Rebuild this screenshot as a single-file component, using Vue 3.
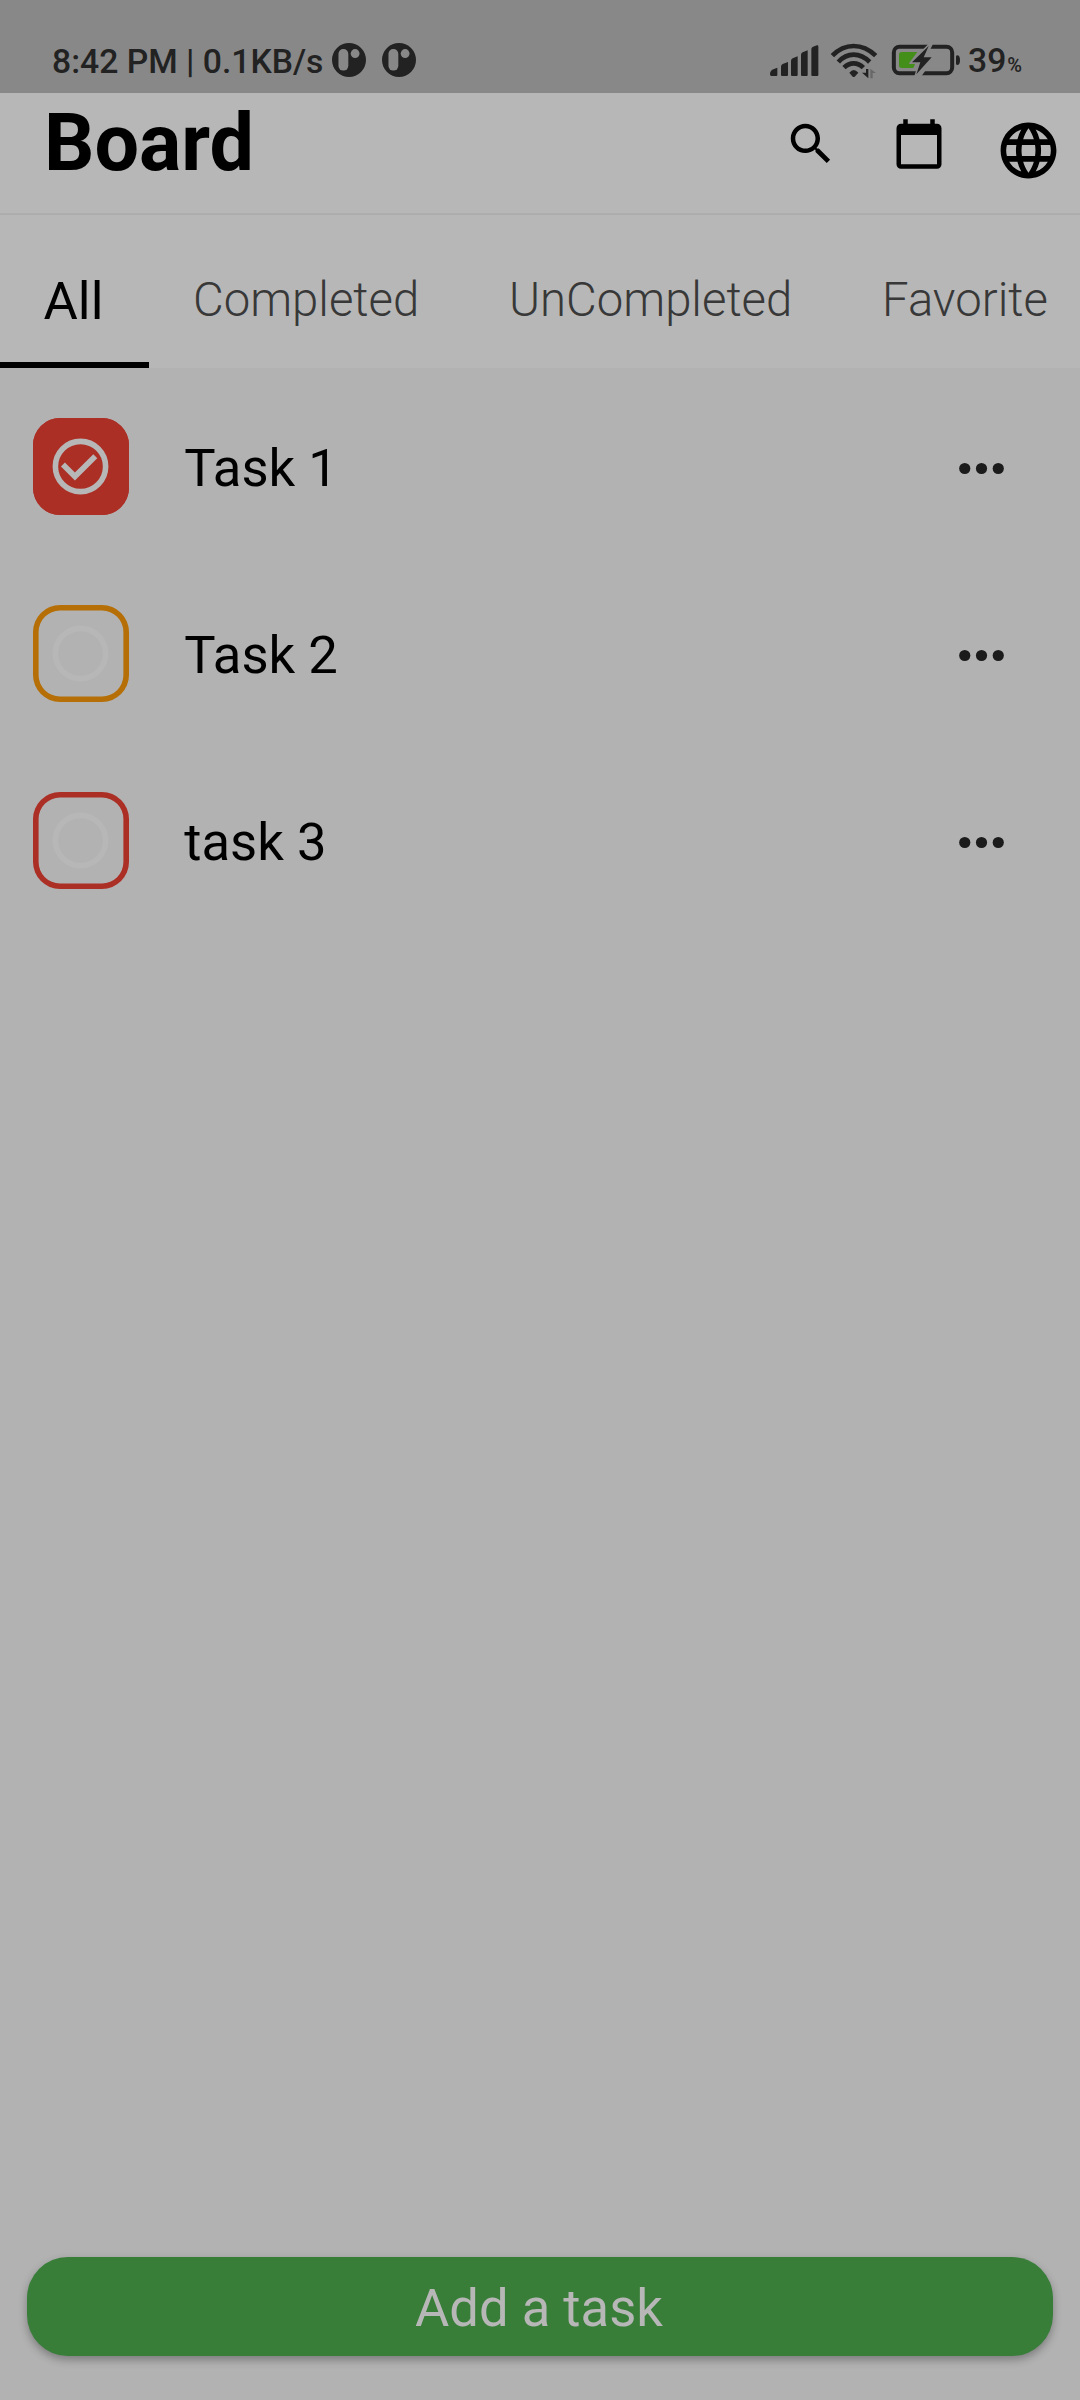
<script setup>
const tabs = ['All', 'Completed', 'UnCompleted', 'Favorite']
const active = 'All'
const tasks = [
  { title: 'Task 1', tone: 'red', done: true },
  { title: 'Task 2', tone: 'orange', done: false },
  { title: 'task 3', tone: 'red', done: false },
]
</script>

<template>
  <div class="screen">
    <div class="status">
      <span class="clock">8:42 PM | 0.1KB/s</span>
      <svg v-for="n in 2" :key="n" class="badge" viewBox="0 0 100 100">
        <circle cx="50" cy="50" r="50" fill="#222" />
        <rect x="19" y="18" width="29" height="63" rx="14" fill="#888" />
        <circle cx="68" cy="31" r="13" fill="#888" />
      </svg>
      <svg class="sys" viewBox="90 66 572 114">
        <g fill="#222">
          <path d="M90 163Q90 152 100 148L112 143V165Q112 168 109 168H94Q90 168 90 163z" />
          <path d="M123 140Q123 134 128 132L144 126V165Q144 168 141 168H126Q123 168 123 165z" />
          <path d="M153 122Q153 117 158 115L173 109V165Q173 168 170 168H156Q153 168 153 165z" />
          <path d="M183 104Q183 99 188 97L203 91V165Q203 168 200 168H186Q183 168 183 165z" />
          <path d="M214 87Q214 82 219 80L231 76Q235 75 235 80V165Q235 168 232 168H217Q214 168 214 165z" />
          <path d="M328 158Q341 142 355 158L344 170Q341 172 338 170z" />
          <path d="M378 147H385V175L366 158H378z" />
          <path d="M648 110Q648 106 653 106Q660 108 660 120Q660 133 653 135Q648 135 648 131z" />
        </g>
        <path d="M391 175V146L408 159H398V175z" fill="#686868" />
        <g fill="none" stroke="#222" stroke-width="14">
          <path d="M277 107Q305 78 341 78T407 107" />
          <path d="M295 126Q315 104 341 104T389 126" />
          <path d="M312 143Q325 130 341 130T370 143" />
        </g>
        <rect x="461.500" y="80.500" width="175" height="79" rx="17" fill="none" stroke="#222" stroke-width="12" />
        <path d="M485 96H532L508 128L525 133L520 144H485Q477 144 477 136V104Q477 96 485 96z" fill="#448f1a" />
        <path d="M567 70L506 132H534L522 172H542L589 106H562L580 70z" fill="#888" />
        <path d="M566 78L516 127H541L529 163L575 112H551z" fill="#222" />
      </svg>
      <span class="pct">39<small>%</small></span>
    </div>

    <header class="bar">
      <h1>Board</h1>
      <nav class="actions">
        <svg class="ic" viewBox="0 0 24 24"><path d="M15.500 14h-.79l-.28-.27C15.410 12.590 16 11.110 16 9.500 16 5.910 13.090 3 9.500 3S3 5.910 3 9.500 5.910 16 9.500 16c1.610 0 3.090-.59 4.230-1.570l.27.28v.79l5 4.990L20.490 19l-4.990-5zm-6 0C7.010 14 5 11.990 5 9.500S7.010 5 9.500 5 14 7.010 14 9.500 11.990 14 9.500 14z" /></svg>
        <svg class="ic" viewBox="0 0 24 24"><path d="M20 3h-1V1h-2v2H7V1H5v2H4c-1.100 0-2 .9-2 2v16c0 1.100.9 2 2 2h16c1.100 0 2-.9 2-2V5c0-1.100-.9-2-2-2zm0 18H4V8h16v13z" /></svg>
        <svg class="ic globe" viewBox="0 0 24 24"><path d="M11.990 2C6.470 2 2 6.480 2 12s4.470 10 9.990 10C17.520 22 22 17.520 22 12S17.520 2 11.990 2zm6.930 6h-2.950c-.32-1.250-.78-2.450-1.380-3.560 1.840.63 3.370 1.910 4.330 3.560zM12 4.040c.83 1.200 1.480 2.530 1.910 3.960h-3.820c.43-1.430 1.080-2.760 1.910-3.960zM4.260 14C4.100 13.360 4 12.690 4 12s.1-1.360.26-2h3.380c-.08.66-.14 1.320-.14 2 0 .68.06 1.340.14 2H4.260zm.82 2h2.950c.32 1.250.78 2.450 1.380 3.560-1.840-.63-3.370-1.900-4.330-3.560zm2.950-8H5.080c.96-1.660 2.490-2.930 4.330-3.560C8.810 5.550 8.350 6.750 8.030 8zM12 19.960c-.83-1.200-1.480-2.530-1.910-3.960h3.820c-.43 1.430-1.080 2.760-1.910 3.960zM14.340 14H9.660c-.09-.66-.16-1.320-.16-2 0-.68.07-1.350.16-2h4.680c.09.65.16 1.320.16 2 0 .68-.07 1.340-.16 2zm.25 5.560c.6-1.110 1.060-2.310 1.380-3.560h2.950c-.96 1.650-2.490 2.930-4.330 3.560zM16.360 14c.08-.66.14-1.320.14-2 0-.68-.06-1.340-.14-2h3.380c.16.64.26 1.310.26 2s-.1 1.360-.26 2h-3.380z" /></svg>
      </nav>
    </header>

    <div class="tabs">
      <div v-for="t in tabs" :key="t" class="tab" :class="{ on: t === active }"><span>{{ t }}</span></div>
    </div>

    <main class="list">
      <div v-for="t in tasks" :key="t.title" class="row">
        <div class="check" :class="[t.tone, { done: t.done }]">
          <svg viewBox="0 0 24 24">
            <circle cx="12" cy="12" r="9" fill="none" stroke="currentColor" stroke-width="2" />
            <path v-if="t.done" d="M16.590 7.580L10 14.170l-3.590-3.580L5 12l5 5 8-8z" fill="currentColor" />
          </svg>
        </div>
        <span class="title">{{ t.title }}</span>
        <svg class="more" viewBox="0 0 24 24"><circle v-for="x in [6, 12, 18]" :key="x" :cx="x" cy="12" r="2" /></svg>
      </div>
    </main>

    <button class="add">Add a task</button>
  </div>
</template>

<style>
html, body { margin: 0; background: #b2b2b2; }
</style>

<style scoped>
.screen {
  width: 1080px; height: 2400px; display: flex; flex-direction: column; overflow: hidden;
  background: #b2b2b2; color: #000; font-family: Roboto, "Liberation Sans", sans-serif; box-sizing: border-box;
}
.screen * { box-sizing: border-box; }
.status {
  height: 93px; flex: none; background: #888; color: #222; display: flex; align-items: center;
  padding: 29px 50px 0 52px; font-weight: 500; font-size: 33.700px; line-height: 40px;
}
.clock { width: 280px; white-space: nowrap; padding-top: 2px; }
.badge { width: 34px; height: 34px; margin: -2px 16px 0 0; flex: none; }
.sys { width: 190.700px; height: 38px; margin: -1px 0 0 auto; flex: none; }
.pct { margin-left: 7px; width: 62px; white-space: nowrap; padding-top: 4px; }
.pct small { font-size: 20px; margin-left: 1px; }
.bar {
  height: 122px; flex: none; background: #b7b7b7; border-bottom: 2px solid #adadad;
  display: flex; justify-content: space-between; padding: 0 18px 0 44px;
}
h1 { margin: 3px 0 0; font-size: 79px; line-height: 94px; font-weight: 700; }
.actions { display: flex; align-items: flex-start; padding-top: 24px; }
.ic { width: 54px; height: 54px; margin-right: 54px; }
.ic.globe { width: 67px; height: 67px; margin: -0.500px 0 0 -5px; }
.tabs { height: 153px; flex: none; background: #b7b7b7; display: flex; gap: 1.800px; }
.tab {
  display: flex; align-items: center; justify-content: center; padding: 22px 44px 0; flex: none;
  font-size: 47.250px; font-weight: 300; color: #383838; border-bottom: 6px solid transparent;
}
.tab.on {
  width: 149px; margin-right: -1.800px; padding: 24px 45px 0 43px;
  font-size: 52.600px; font-weight: 400; color: #000; border-color: #000;
}
.list { flex: 1; padding-top: 5px; }
.row { height: 187px; display: flex; align-items: center; padding: 0 65px 0 33px; }
.check {
  width: 96.300px; height: 96.300px; border-radius: 27px; flex: none;
  box-shadow: inset 0 0 0 5.600px var(--tone);
  display: flex; align-items: center; justify-content: center;
}
.check svg { width: 67px; height: 67px; flex: none; color: #b7b7b7; margin-left: -1px; }
.red { --tone: #ac2f26; }
.orange { --tone: #b56f06; }
.done { background: var(--tone); }
.title { margin-left: 55px; padding-top: 3px; flex: 1; font-size: 52.600px; }
.more { width: 67px; height: 67px; margin-top: 3px; fill: #1b1b1b; }
.add {
  height: 99px; flex: none; margin: 0 27px 44px; border: 0; border-radius: 41px; padding: 3px 2px 0 0;
  background: #387e39; color: #b7b7b7; font: 400 52.600px/96px Roboto, "Liberation Sans", sans-serif;
  box-shadow: 0 4px 8px rgba(0, 0, 0, .3);
}
</style>
